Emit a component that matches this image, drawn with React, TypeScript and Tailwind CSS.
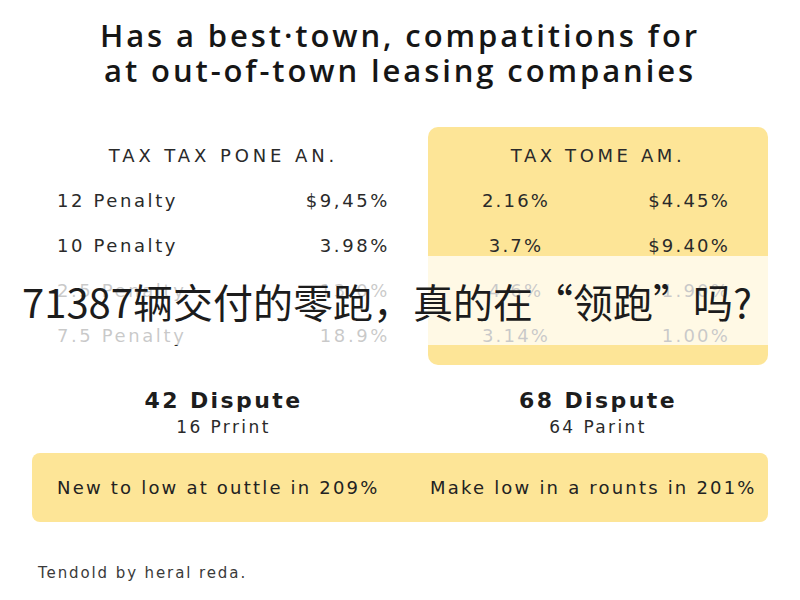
const leftRows = [
  ['12 Penalty', '$9,45%'],
  ['10 Penalty', '3.98%'],
  ['2.5 Penalty', '13.0%'],
  ['7.5 Penalty', '18.9%'],
]

const rightRows = [
  ['2.16%', '$4.45%'],
  ['3.7%', '$9.40%'],
  ['4.6%', '1.90%'],
  ['3.14%', '1.00%'],
]

export default function App() {
  return (
    <div className="relative w-[800px] h-[600px] overflow-hidden bg-white text-[#1d1d1d] font-['DejaVu_Sans',sans-serif]">
      {/* Title */}
      <h1 className="pt-[18px] text-center text-[31px] font-semibold leading-[35px] tracking-[2.9px] text-[#161616] font-['Open_Sans',sans-serif]">
        Has a best·town, compatitions for
        <br />
        at out-of-town leasing companies
      </h1>

      {/* Tables */}
      <div className="mt-[39px] flex items-start">
        <div className="ml-[57px] w-[333px] pt-[6px]">
          <div className="h-[45px] flex items-center justify-center text-[18px] tracking-[3.9px] text-[#2a2a2a]">
            TAX TAX PONE AN.
          </div>
          {leftRows.map(([label, value]) => (
            <div
              key={label}
              className="h-[45px] flex items-center justify-between text-[18px] tracking-[2.6px] text-[#2a2a2a]"
            >
              <span>{label}</span>
              <span>{value}</span>
            </div>
          ))}
        </div>

        <div className="ml-[38px] w-[340px] h-[238px] rounded-[10px] bg-[#fde597] px-[38px] pt-[6px]">
          <div className="h-[45px] flex items-center justify-center text-[18px] tracking-[3.6px] text-[#2a2a2a]">
            TAX TOME AM.
          </div>
          {rightRows.map(([a, b]) => (
            <div
              key={a}
              className="h-[45px] flex items-center text-[18px] tracking-[2.2px] text-[#2a2a2a]"
            >
              <span className="w-[100px] text-center">{a}</span>
              <span className="ml-auto">{b}</span>
            </div>
          ))}
        </div>
      </div>

      {/* Disputes */}
      <div className="mt-[22px] flex">
        <div className="ml-[57px] w-[333px] text-center">
          <div className="text-[22px] font-bold leading-[28px] tracking-[2.4px]">42 Dispute</div>
          <div className="text-[17px] leading-[24px] tracking-[2.4px] text-[#2a2a2a]">16 Prrint</div>
        </div>
        <div className="ml-[38px] w-[340px] text-center">
          <div className="text-[22px] font-bold leading-[28px] tracking-[2.4px]">68 Dispute</div>
          <div className="text-[17px] leading-[24px] tracking-[2.4px] text-[#2a2a2a]">64 Parint</div>
        </div>
      </div>

      {/* Highlight bar */}
      <div className="mx-[32px] mt-[14px] h-[69px] rounded-[8px] bg-[#fde597] flex items-center text-[18px] tracking-[2.2px] text-[#222]">
        <span className="pl-[25px] w-[398px] whitespace-nowrap">New to low at outtle in 209%</span>
        <span className="whitespace-nowrap">Make low in a rounts in 201%</span>
      </div>

      {/* Footer */}
      <div className="mt-[41px] pl-[38px] text-[15px] leading-[20px] tracking-[1.9px] text-[#3a3a3a]">
        Tendold by heral reda.
      </div>

      {/* Subtitle overlay */}
      <div className="absolute left-0 right-0 top-[256px] h-[89px] bg-white/75 flex items-center pl-[22px]">
        <span className="text-[40px] leading-none text-[#1c1c1c] font-['Noto_Sans_CJK_SC',sans-serif]">
          71387辆交付的零跑，真的在“领跑”吗?
        </span>
      </div>
    </div>
  )
}
